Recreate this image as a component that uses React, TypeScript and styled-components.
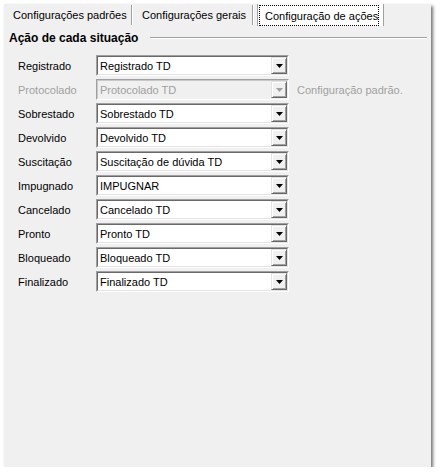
import React from "react";
import styled, { createGlobalStyle } from "styled-components";

const GlobalStyle = createGlobalStyle`
  html, body {
    margin: 0;
    padding: 0;
    background: #ffffff;
  }
  body {
    font-family: "Liberation Sans", Arial, sans-serif;
    font-size: 11px;
    color: #000;
  }
`;

const Window = styled.div`
  margin: 4px 0 0 4px;
  width: 427px;
  height: 463px;
  background: #f0f0f0;
  box-shadow: 2px 2px 3px rgba(0, 0, 0, 0.55);
  display: flex;
  flex-direction: column;
`;

const TabStrip = styled.div`
  display: flex;
  height: 24px;
  box-sizing: border-box;
  padding-top: 1px;
  padding-bottom: 3px;
`;

const Tab = styled.div<{ $width: number; $pad: number }>`
  width: ${(p) => p.$width}px;
  box-sizing: border-box;
  padding-left: ${(p) => p.$pad}px;
  display: flex;
  align-items: center;
  border-right: 1px solid #a0a0a0;
  box-shadow: 1px 0 0 #ffffff;
  white-space: nowrap;
`;

const ActiveTab = styled.div`
  margin-left: 4px;
  margin-top: -1px;
  margin-bottom: -1px;
  width: 127px;
  box-sizing: border-box;
  border-left: 1px solid #a0a0a0;
  border-right: 1px solid #a0a0a0;
  background: #ffffff;
  padding: 1px 4px 0 1px;
  display: flex;
`;

const FocusRect = styled.div`
  flex: 1;
  border: 1px dotted #000;
  display: flex;
  align-items: center;
  padding-left: 5px;
  white-space: nowrap;
`;

const SectionHeader = styled.div`
  display: flex;
  align-items: center;
  height: 16px;
  margin-top: 2px;
  padding-left: 5px;
  padding-right: 4px;
`;

const SectionTitle = styled.span`
  font-weight: bold;
  font-size: 12px;
  white-space: nowrap;
`;

const Rule = styled.div`
  flex: 1;
  margin-left: 12px;
  border-top: 1px solid #a0a0a0;
  border-bottom: 1px solid #ffffff;
`;

const Rows = styled.div`
  display: flex;
  flex-direction: column;
  gap: 3px;
  margin-top: 9px;
  padding-left: 14px;
`;

const Row = styled.div`
  display: flex;
  align-items: center;
  height: 21px;
`;

const Label = styled.span<{ $disabled?: boolean }>`
  width: 78px;
  color: ${(p) => (p.$disabled ? "#a0a0a0" : "#000")};
  white-space: nowrap;
`;

const Combo = styled.div<{ $disabled?: boolean }>`
  width: 193px;
  height: 21px;
  box-sizing: border-box;
  border: 1px solid;
  border-color: #a0a0a0 #ffffff #ffffff #a0a0a0;
  display: flex;
`;

const ComboInner = styled.div<{ $disabled?: boolean }>`
  flex: 1;
  display: flex;
  border: 1px solid;
  border-color: ${(p) =>
    p.$disabled ? "#c8c8c8 #f0f0f0 #f0f0f0 #c8c8c8" : "#696969 #e3e3e3 #e3e3e3 #696969"};
  background: ${(p) => (p.$disabled ? "#f0f0f0" : "#ffffff")};
`;

const ComboText = styled.span<{ $disabled?: boolean }>`
  flex: 1;
  display: flex;
  align-items: center;
  padding-left: 2px;
  color: ${(p) => (p.$disabled ? "#a0a0a0" : "#000")};
  white-space: nowrap;
  overflow: hidden;
`;

const DropButton = styled.div`
  width: 16px;
  box-sizing: border-box;
  border: 1px solid;
  border-color: #e3e3e3 #696969 #696969 #e3e3e3;
  box-shadow: inset 1px 1px 0 #ffffff, inset -1px -1px 0 #a0a0a0;
  background: #f0f0f0;
  display: flex;
  align-items: center;
  justify-content: center;
`;

const Hint = styled.span`
  margin-left: 8px;
  color: #a0a0a0;
  white-space: nowrap;
`;

const Arrow = ({ color }: { color: string }) => (
  <svg width="7" height="4" viewBox="0 0 7 4">
    <path d="M0 0 H7 L3.5 4 Z" fill={color} />
  </svg>
);

type Situation = {
  label: string;
  value: string;
  disabled?: boolean;
  hint?: string;
};

const situations: Situation[] = [
  { label: "Registrado", value: "Registrado TD" },
  {
    label: "Protocolado",
    value: "Protocolado TD",
    disabled: true,
    hint: "Configuração padrão.",
  },
  { label: "Sobrestado", value: "Sobrestado TD" },
  { label: "Devolvido", value: "Devolvido TD" },
  { label: "Suscitação", value: "Suscitação de dúvida TD" },
  { label: "Impugnado", value: "IMPUGNAR" },
  { label: "Cancelado", value: "Cancelado TD" },
  { label: "Pronto", value: "Pronto TD" },
  { label: "Bloqueado", value: "Bloqueado TD" },
  { label: "Finalizado", value: "Finalizado TD" },
];

export default function App() {
  return (
    <>
      <GlobalStyle />
      <Window>
        <TabStrip>
          <Tab $width={128} $pad={9}>
            Configurações padrões
          </Tab>
          <Tab $width={121} $pad={10}>
            Configurações gerais
          </Tab>
          <ActiveTab>
            <FocusRect>Configuração de ações</FocusRect>
          </ActiveTab>
        </TabStrip>

        <SectionHeader>
          <SectionTitle>Ação de cada situação</SectionTitle>
          <Rule />
        </SectionHeader>

        <Rows>
          {situations.map((s) => (
            <Row key={s.label}>
              <Label $disabled={s.disabled}>{s.label}</Label>
              <Combo>
                <ComboInner $disabled={s.disabled}>
                  <ComboText $disabled={s.disabled}>{s.value}</ComboText>
                  <DropButton>
                    <Arrow color={s.disabled ? "#a0a0a0" : "#000"} />
                  </DropButton>
                </ComboInner>
              </Combo>
              {s.hint && <Hint>{s.hint}</Hint>}
            </Row>
          ))}
        </Rows>
      </Window>
    </>
  );
}
